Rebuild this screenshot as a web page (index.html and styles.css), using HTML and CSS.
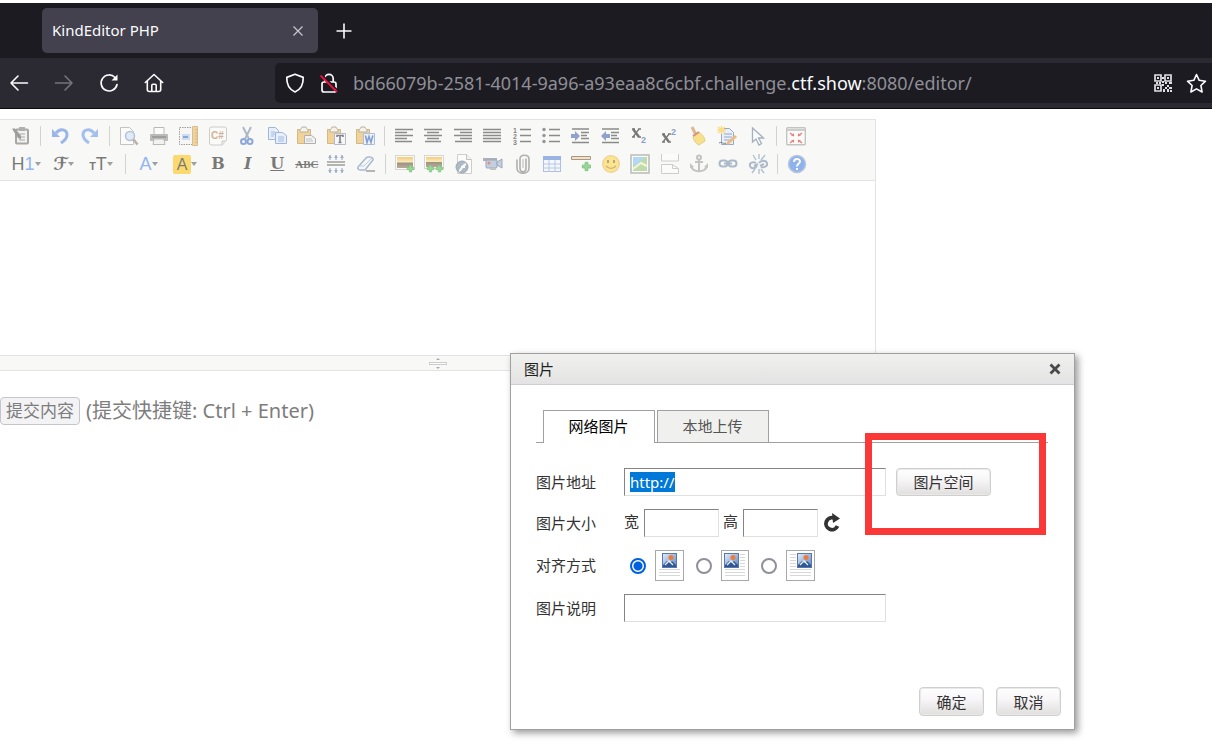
FILE: index.html
```html
<!DOCTYPE html>
<html lang="zh-CN">
<head>
<meta charset="utf-8">
<title>KindEditor PHP</title>
<link rel="stylesheet" href="styles.css">
</head>
<body>
<svg class="defs" aria-hidden="true">
  <defs>
    <linearGradient id="photo" x1="0" y1="0" x2="1" y2="1"><stop offset="0" stop-color="#e4eefa"/><stop offset="1" stop-color="#5d84c0"/></linearGradient>
    <linearGradient id="sunset" x1="0" y1="0" x2="0" y2="1"><stop offset="0" stop-color="#f5a81c"/><stop offset=".45" stop-color="#fbe08a"/><stop offset=".55" stop-color="#57412a"/><stop offset="1" stop-color="#8a6b48"/></linearGradient>
    <symbol id="picture" viewBox="0 0 15 15"><rect x=".5" y=".5" width="14" height="14" fill="url(#photo)" stroke="#5877aa"/><circle cx="9" cy="4.500" r="2.500" fill="#ee7a3c"/><path d="M1 14v-2l4-4 3 2 2-2 4 4v2z" fill="#2f5795"/><path d="m3 12 4-4 4 4" fill="none" stroke="#e6eef8" stroke-width="1.300"/></symbol>
    <symbol id="clip" viewBox="0 0 20 20"><path d="M1.500 3.500h13v14h-13z" fill="#edb54a" stroke="#b38530"/><path d="M4 4c0-1 2-1 2-3h4c0 2 2 2 2 3v2H4z" fill="#f4efe3" stroke="#85775c"/></symbol>
    <symbol id="plus" viewBox="0 0 8 8"><path d="M3 1h2v2h2v2H5v2H3V5H1V3h2z" fill="#48c348" stroke="#249524" stroke-width=".7"/></symbol>
  </defs>
</svg>

<header class="browser">
  <div class="tabbar">
    <div class="tab"><span>KindEditor PHP</span>
      <button class="plain" aria-label="关闭标签页"><svg width="12" height="12" viewBox="0 0 12 12" fill="none" stroke="#c9c8cf" stroke-width="1.200"><path d="m1.500 1.500 9 9m0-9-9 9"/></svg></button>
    </div>
    <button class="plain" aria-label="新建标签页"><svg width="16" height="16" viewBox="0 0 16 16" fill="none" stroke="#fbfbfe" stroke-width="1.600"><path d="M8 .5v15M.5 8h15"/></svg></button>
  </div>
  <nav class="navbar">
    <div class="navbuttons">
      <button class="plain" aria-label="后退"><svg width="20" height="20" viewBox="0 0 20 20" fill="none" stroke="#fbfbfe" stroke-width="1.600" stroke-linecap="round" stroke-linejoin="round"><path d="M18.500 10H2m7-7-7 7 7 7"/></svg></button>
      <button class="plain" aria-label="前进"><svg width="20" height="20" viewBox="0 0 20 20" fill="none" stroke="#74737b" stroke-width="1.600" stroke-linecap="round" stroke-linejoin="round"><path d="M1.500 10H18m-7-7 7 7-7 7"/></svg></button>
      <button class="plain" aria-label="刷新"><svg width="20" height="20" viewBox="0 0 20 20" fill="none" stroke="#fbfbfe" stroke-width="1.700" stroke-linecap="round"><path d="M18 11.500A8 8 0 1 1 16 4.500"/><path d="M18.500 1.500v6h-6z" fill="#fbfbfe" stroke="none"/></svg></button>
      <button class="plain" aria-label="主页"><svg width="20" height="20" viewBox="0 0 20 20" fill="none" stroke="#fbfbfe" stroke-width="1.600" stroke-linecap="round" stroke-linejoin="round"><path d="m1.300 9.500 8.700-8 8.700 8M3.300 8v8.500c0 1.300.7 2 2 2h9.400c1.300 0 2-.7 2-2V8"/><path d="M7.800 18v-5.500c0-.8.500-1.300 1.200-1.300h2c.7 0 1.200.5 1.200 1.300V18"/></svg></button>
    </div>
    <div class="address">
      <svg width="20" height="20" viewBox="0 0 20 20" fill="none" stroke="#fbfbfe" stroke-width="1.700" stroke-linejoin="round"><path d="m10 1.200 8.200 3.200c.3 7-2.300 12-8.200 14.600C4.100 16.400 1.500 11.400 1.800 4.400z"/></svg>
      <svg width="20" height="20" viewBox="0 0 20 20" fill="none" stroke="#fbfbfe" stroke-width="1.700"><path d="M5.800 9V5.500a4.200 4.200 0 0 1 8.400 0V9"/><rect x="3" y="9" width="14" height="10" rx="2"/><path d="M2.500 1.500 19 18" stroke="#1c1b22" stroke-width="2"/><path d="M1.500 2.500 18 19" stroke="#f0103c" stroke-width="1.800"/></svg>
      <span class="url">bd66079b-2581-4014-9a96-a93eaa8c6cbf.challenge.<b>ctf.show</b>:8080/editor/</span>
      <button class="plain" aria-label="二维码"><svg width="18" height="18" viewBox="0 0 18 18"><g fill="none" stroke="#e0dfe4" stroke-width="1.700"><path d="M1 1h6v6H1zM11 1h6v6h-6zM1 11h6v6H1z"/></g><path d="M3 3h2v2H3zm10 0h2v2h-2zM3 13h2v2H3zM8 3h2v2H8zm0 4h2v2H8zM2 8h2v2H2zm3 0h2v2H5zm6 0h2v2h-2zm4 0h3v2h-3zM8 10h2v2H8zm5 1h2v2h-2zm-2 2h2v2h-2zm4 0h3v2h-3zm-2 2h2v3h-2zm-4 0h2v3H9zm7 1h2v2h-2z" fill="#e0dfe4"/></svg></button>
      <button class="plain" aria-label="添加书签"><svg width="21" height="21" viewBox="0 0 21 21" fill="none" stroke="#fbfbfe" stroke-width="1.600" stroke-linejoin="round"><path d="m10.500 1.500 2.700 5.800 6.300.9-4.600 4.300 1.200 6.500-5.600-3.100L4.900 19l1.200-6.500L1.500 8.200l6.300-.9z"/></svg></button>
    </div>
  </nav>
</header>

<main>
  <section class="editor" aria-label="编辑器">
    <div class="toolbar">
      <div class="toolrow">
        <div class="group">
          <button title="HTML代码"><svg viewBox="0 0 20 20"><rect x="5" y="3.500" width="12" height="14" rx="1" fill="#eee" stroke="#666" stroke-width="2"/><path d="M8 1h6v4H8z" fill="#777"/><path d="M9 8h5M9 11h5M8 14h6" stroke="#666"/><path d="M1 2.500h3l6 7v4L7 12 3 6z" fill="#555"/></svg></button>
        </div><i class="sep"></i>
        <div class="group pair">
          <button title="后退"><svg viewBox="0 0 20 20"><path d="M6 7c4-5 11-4 11 2 0 4-3 6-6 8" fill="none" stroke="#4c80e0" stroke-width="3"/><path d="M2 3v8h8z" fill="#4c80e0"/></svg></button>
          <button title="前进"><svg viewBox="0 0 20 20"><path d="M14 7C10 2 3 3 3 9c0 4 3 6 6 8" fill="none" stroke="#5c92e8" stroke-width="3"/><path d="M18 3v8h-8z" fill="#5c92e8"/></svg></button>
        </div><i class="sep"></i>
        <div class="group nine">
          <button title="预览"><svg viewBox="0 0 20 20"><path d="M1.500 1.500h9l4 4v13h-13z" fill="#fff" stroke="#999"/><circle cx="11" cy="10" r="4.500" fill="#cfe2fb" stroke="#7b96c0" stroke-width="1.500"/><path d="m14.500 13.500 4 5" stroke="#8b7460" stroke-width="2.500"/></svg></button>
          <button title="打印"><svg viewBox="0 0 20 20"><path d="M5 8V1.500h10V8" fill="#fff" stroke="#888"/><rect x="1" y="8" width="18" height="7" rx="1" fill="#888"/><path d="M3 11h14" stroke="#222"/><path d="M5 13h10l1 5.500H4z" fill="#eee" stroke="#888"/></svg></button>
          <button title="模板"><svg viewBox="0 0 20 20"><path d="M1.500 1.500h13v17h-13z" fill="#f5f5f5" stroke="#555" stroke-dasharray="1.500 1"/><path d="M4 8h8v6H4z" fill="#abc9ef"/><path d="M5 11h5" stroke="#3566a5" stroke-width="2"/><path d="M14.500.500h5v19h-5z" fill="#e8b760" stroke="#c98e36"/><path d="M17 4h3M17 7h3M17 10h3M17 13h3M17 16h3" stroke="#b97e26"/></svg></button>
          <button title="代码"><svg viewBox="0 0 20 20"><path d="M1.500 3a2 2 0 0 1 2-2h13a2 2 0 0 1 2 2v11l-4 5h-11a2 2 0 0 1-2-2z" fill="#fcfcfc" stroke="#aaa"/><path d="M14 19v-4h4" fill="#ddd" stroke="#aaa"/><text x="3" y="13" class="csharp">C#</text></svg></button>
          <button title="剪切"><svg viewBox="0 0 20 20"><path d="m6 1 6 12M14 1 8 13" stroke="#7385a3" stroke-width="2"/><circle cx="6.500" cy="15.500" r="2.500" fill="none" stroke="#3468c4" stroke-width="2"/><circle cx="13" cy="15.500" r="2.500" fill="none" stroke="#3468c4" stroke-width="2"/></svg></button>
          <button title="复制"><svg viewBox="0 0 20 20"><g fill="#dce9fd" stroke="#5980c4"><path d="M1.500 1.500h7l3 3v9h-10z"/><path d="M8.500 6.500h7l4 3v8h-11z"/></g><path d="M4 6h4M4 8h4M4 10h3M11 11h6M11 13h6M11 15h6" stroke="#5b8be0"/></svg></button>
          <button title="粘贴"><svg viewBox="0 0 20 20"><use href="#clip"/><path d="M8.500 9.500h7l4 3v5h-11z" fill="#eee" stroke="#777"/><path d="M10 13h6M10 15h7" stroke="#999"/></svg></button>
          <button title="粘贴为无格式文本"><svg viewBox="0 0 20 20"><use href="#clip"/><path d="M8.500 7.500h11v11h-11z" fill="#f3f6fa" stroke="#889"/><path d="M11 11v-1.500h6V11m-3-1.500v7m-1.500 0h3" fill="none" stroke="#223" stroke-width="1.600"/></svg></button>
          <button title="从Word粘贴"><svg viewBox="0 0 20 20"><use href="#clip"/><path d="M8.500 7.500h11v11h-11z" fill="#e6effd" stroke="#6c92c8"/><path d="m10.500 9.500 1.500 7 2-6 2 6 1.800-7" fill="none" stroke="#2657b3" stroke-width="1.600"/></svg></button>
        </div><i class="sep"></i>
        <div class="group thirteen">
          <button title="左对齐"><svg viewBox="0 0 20 20"><path class="lines" d="M1 3.500h18M1 6.500h12M1 9.500h18M1 12.500h12M1 15.500h17"/></svg></button>
          <button title="居中"><svg viewBox="0 0 20 20"><path class="lines" d="M1 3.500h18M4 6.500h12M1 9.500h18M4 12.500h12M2 15.500h16"/></svg></button>
          <button title="右对齐"><svg viewBox="0 0 20 20"><path class="lines" d="M1 3.500h18M7 6.500h12M1 9.500h18M7 12.500h12M2 15.500h17"/></svg></button>
          <button title="两端对齐"><svg viewBox="0 0 20 20"><path class="lines" d="M1 3.500h18M1 6.500h18M1 9.500h18M1 12.500h18M1 15.500h18"/></svg></button>
          <button title="编号"><svg viewBox="0 0 20 20"><path class="lines" d="M8 3.500h11M8 9.500h11M8 15.500h11"/><text x="1" y="7" class="num">1</text><text x="1" y="13" class="num">2</text><text x="1" y="19" class="num">3</text></svg></button>
          <button title="项目符号"><svg viewBox="0 0 20 20"><path class="lines" d="M8 3.500h11M8 9.500h11M8 15.500h11"/><g fill="#445"><circle cx="3" cy="3.500" r="1.700"/><circle cx="3" cy="9.500" r="1.700"/><circle cx="3" cy="15.500" r="1.700"/></g></svg></button>
          <button title="增加缩进"><svg viewBox="0 0 20 20"><path class="lines" d="M2 3h17M11 6.500h8M11 9.500h6M11 12.500h8M2 16.500h17"/><path d="M1 8h4V5l5 5-5 5v-3H1z" fill="#3d5da7"/></svg></button>
          <button title="减少缩进"><svg viewBox="0 0 20 20"><path class="lines" d="M2 3h17M11 6.500h8M11 9.500h6M11 12.500h8M2 16.500h17"/><path d="M10 8H6V5l-5 5 5 5v-3h4z" fill="#3d5da7"/></svg></button>
          <button title="下标"><svg viewBox="0 0 20 20"><path d="m4 3 6 8" stroke="#111" stroke-width="2.500"/><path d="m10 3-6 8M3 3h3m3 0h3M3 11h3m3 0h3" stroke="#111" stroke-width="1.300"/><text x="12" y="17" class="script">2</text></svg></button>
          <button title="上标"><svg viewBox="0 0 20 20"><path d="m4 8 6 8" stroke="#111" stroke-width="2.500"/><path d="m10 8-6 8M3 8h3m3 0h3M3 16h3m3 0h3" stroke="#111" stroke-width="1.300"/><text x="12" y="9" class="script">2</text></svg></button>
          <button title="清理HTML代码"><svg viewBox="0 0 20 20"><path d="m4 1 4 8" stroke="#c28442" stroke-width="3"/><path d="m5 11 6-5c4 3 6 6 6 9l-6 4c-3-1-5-4-6-8z" fill="#f7cf35" stroke="#d5ac30"/><path d="m5 10 6-4" stroke="#c43a22" stroke-width="2"/></svg></button>
          <button title="一键排版"><svg viewBox="0 0 20 20"><path d="M4.500 2.500h8l4 4v12h-12z" fill="#e1ebfb" stroke="#47699e"/><path d="M7 8h8M7 11h8M7 14h7" stroke="#3a67aa"/><path d="M0 4h9M4.500 0v8M1 1l7 6M8 1 1 7" stroke="#ffc72b" stroke-width="1.500"/><path d="m10 18 9-8" stroke="#e48a24" stroke-width="3"/><path d="M2 17c4-2 4 2 7 0" fill="none" stroke="#222"/></svg></button>
          <button title="全选"><svg viewBox="0 0 20 20"><path d="M5.500 2v14l3.500-3 3 6 2.500-1.500-3-5.500h5z" fill="#fff" stroke="#5e7899" stroke-width="1.300"/></svg></button>
        </div><i class="sep"></i>
        <div class="group">
          <button title="全屏显示"><svg viewBox="0 0 20 20"><rect x=".7" y="1.700" width="18.600" height="17" rx="1" fill="#fcfcfc" stroke="#999" stroke-width="1.400"/><path d="M1 4h18" stroke="#aaa" stroke-width="2"/><path d="m4 7 4 3M16 7l-4 3M4 17l4-3M16 17l-4-3" stroke="#d22" stroke-width="1.500"/><path d="M8 7v3H5zm4 0v3h3zM8 17v-3H5zm4 0v-3h3z" fill="#d22"/></svg></button>
        </div>
      </div>
      <div class="toolrow">
        <div class="group fonts">
          <button title="段落" class="wide letter">H<span class="blue">1</span><i class="arrow"></i></button>
          <button title="字体" class="wide letter fancy">ℱ<i class="arrow"></i></button>
          <button title="文字大小" class="wide letter"><small>T</small>T<i class="arrow"></i></button>
        </div><i class="sep"></i>
        <div class="group styles">
          <button title="文字颜色" class="wide letter"><span class="blue">A</span><i class="arrow"></i></button>
          <button title="文字背景" class="wide letter"><span class="mark">A</span><i class="arrow"></i></button>
          <button title="粗体" class="letter serif">B</button>
          <button title="斜体" class="letter serif italic">I</button>
          <button title="下划线" class="letter serif under">U</button>
          <button title="删除线" class="letter serif strike">ABC</button>
          <button title="行距"><svg viewBox="0 0 20 20"><path d="M1 8h18M1 11h18" stroke="#555" stroke-width="1.500"/><path d="M4 6V1M10 6V1M16 6V1M4 14v5M10 14v5M16 14v5" stroke="#5574a8" stroke-width="1.200"/><path d="m2 4 2-3 2 3zm6 0 2-3 2 3zm6 0 2-3 2 3zM2 16l2 3 2-3zm6 0 2 3 2-3zm6 0 2 3 2-3z" fill="#5574a8"/></svg></button>
          <button title="删除格式"><svg viewBox="0 0 20 20"><path d="m2 13 8-9c2-2 8-1 7 2l-8 10H5c-2 0-4-1-3-3z" fill="#f4f8ff" stroke="#6b82ad" stroke-width="1.500"/><path d="M2 12h6l8-8" fill="none" stroke="#90a5c8"/><path d="M10 17h9" stroke="#555" stroke-width="1.500"/></svg></button>
        </div><i class="sep"></i>
        <div class="group thirteen">
          <button title="图片"><svg viewBox="0 0 20 20"><rect x=".5" y="1.500" width="19" height="14" fill="#fff" stroke="#bbb"/><path d="M2 3h16v11H2z" fill="url(#sunset)"/><use href="#plus" x="11" y="10" width="9" height="9"/></svg></button>
          <button title="批量图片上传"><svg viewBox="0 0 20 20"><rect x=".5" y="1.500" width="19" height="13" fill="#fff" stroke="#bbb"/><path d="M2 3h16v10H2z" fill="url(#sunset)"/><use href="#plus" x="2" y="10" width="9" height="9"/><use href="#plus" x="11" y="10" width="9" height="9"/></svg></button>
          <button title="Flash"><svg viewBox="0 0 20 20"><path d="M3.500.500h9l5 5v14h-14z" fill="#fff" stroke="#aaa"/><path d="M12.500.500v5h5" fill="#eee" stroke="#999"/><circle cx="8" cy="13" r="6" fill="#72879f" stroke="#53677e"/><path d="M5 17c2 0 3-6 7-7M7 13h4" fill="none" stroke="#fff" stroke-width="2"/></svg></button>
          <button title="视音频"><svg viewBox="0 0 20 20"><path d="M0 4h14v3H0z" fill="#778"/><rect x="3" y="6" width="11" height="8" rx="1" fill="#9aafca" stroke="#516b8f"/><path d="m14 8 5-3v9l-5-3z" fill="#9aafca" stroke="#516b8f"/><circle cx="6" cy="9" r="1.500" fill="#d33"/><path d="M7 14v2h6v-2" fill="#999"/></svg></button>
          <button title="插入文件"><svg viewBox="0 0 20 20"><path d="M13 5v9c0 5-6 5-6 0V5c0-5 9-5 9 0v9c0 7-12 7-12 0V6" fill="none" stroke="#777" stroke-width="1.600" stroke-linecap="round"/><path d="M10 5v9" stroke="#888"/></svg></button>
          <button title="表格"><svg viewBox="0 0 20 20"><rect x="1.500" y="2.500" width="17" height="15" fill="#f3f7fe" stroke="#6f94d6"/><path d="M1 2h18v4H1z" fill="#4d7dd7"/><path d="M1 10h18M1 14h18M7 6v12M13 6v12" stroke="#7c9fdd"/></svg></button>
          <button title="插入横线"><svg viewBox="0 0 20 20"><path d="M.5 2.500h19v3H.5z" fill="#f2cf9b" stroke="#684b2a"/><use href="#plus" x="10" y="7" width="11" height="11"/></svg></button>
          <button title="插入表情"><svg viewBox="0 0 20 20"><circle cx="10" cy="10" r="8.300" fill="#ffd53c" stroke="#eab33e" stroke-width="1.300"/><path d="M7 6v3m6-3v3" stroke="#6b4c18" stroke-width="1.600"/><path d="M5 12c3 3 7 3 10 0" fill="none" stroke="#b2791b" stroke-width="1.600"/></svg></button>
          <button title="百度地图"><svg viewBox="0 0 20 20"><rect x="1" y="1" width="18" height="18" fill="#fff" stroke="#888" stroke-width="1.500"/><path d="M3 3h14v14H3z" fill="#92c46b"/><path d="M3 3h12L9 9l-3 3-3-2z" fill="#7cbef1"/><path d="m3 15 8-6 6 3" fill="none" stroke="#f3f0ca" stroke-width="2"/></svg></button>
          <button title="插入分页符"><svg viewBox="0 0 20 20"><path d="M1.500 0v7h17V0M1.500 19.500v-9h11l6 4v5z" fill="#fff" stroke="#aaa"/><path d="M12.500 10.500v4h6" fill="none" stroke="#aaa"/></svg></button>
          <button title="锚点"><svg viewBox="0 0 20 20"><circle cx="10" cy="3.500" r="2" fill="none" stroke="#999" stroke-width="2"/><path d="M10 5v13M6 8h8M2 12c2 7 14 7 16 0" fill="none" stroke="#999" stroke-width="2"/><path d="M1 14V9l4 4zm18 0V9l-4 4z" fill="#999"/></svg></button>
          <button title="超级链接"><svg viewBox="0 0 20 20"><g fill="none" stroke="#6f86a6" stroke-width="2"><rect x="1.500" y="6.500" width="8" height="6" rx="3"/><rect x="10.500" y="6.500" width="8" height="6" rx="3"/><path d="M6 9.500h8"/></g></svg></button>
          <button title="取消超级链接"><svg viewBox="0 0 20 20"><g fill="none" stroke="#6f86a6" stroke-width="2"><path d="M8 9c-3-2-7 0-6 3s5 3 7 0M11 9c2-3 7-3 8 0s-3 5-6 4"/><path d="m6 12 4-2m2 2 4-2"/></g><path d="m5 1 3 5M11 0v5m6-4-4 5M4 19l3-4m4 0v5m5-1-3-4" stroke="#7290ab" stroke-width="1.300"/></svg></button>
        </div><i class="sep"></i>
        <div class="group">
          <button title="关于"><svg viewBox="0 0 20 20"><circle cx="10" cy="10" r="8.500" fill="#397ae8" stroke="#8b9fc5" stroke-width="1.500"/><path d="M7 8c0-4 6-4 6-.5 0 2-3 2-3 5M10 14v2" fill="none" stroke="#fff" stroke-width="2"/></svg></button>
        </div>
      </div>
    </div>
    <div class="edit" contenteditable="true" role="textbox" aria-label="内容"></div>
    <div class="status"><svg width="20" height="13" viewBox="0 0 20 13"><path d="m8 3 2-2 2 2zm0 7 2 2 2-2z" fill="#aaa"/><rect x="1.500" y="5.500" width="17" height="2" fill="#fff" stroke="#ccc"/></svg></div>
  </section>
  <p class="submit"><button>提交内容</button><span>(提交快捷键: Ctrl + Enter)</span></p>
</main>

<section class="dialog" role="dialog" aria-labelledby="dialog-title">
  <header class="dialog-head"><span id="dialog-title">图片</span>
    <button class="plain" aria-label="关闭"><svg width="12" height="12" viewBox="0 0 12 12"><path d="m2.500 2.500 7 7m0-7-7 7" stroke="#4a4a4a" stroke-width="2.800" stroke-linecap="square"/></svg></button>
  </header>
  <form class="dialog-body">
    <div class="tabs"><button type="button" class="on">网络图片</button><button type="button">本地上传</button></div>
    <div class="fields">
      <div class="row"><label for="url">图片地址</label><input id="url" class="text long" type="text" value="http://"><button type="button" class="btn space">图片空间</button></div>
      <div class="row"><span class="name">图片大小</span><label class="mini" for="w">宽</label><input id="w" class="text short" type="text"><label class="mini high" for="h">高</label><input id="h" class="text short" type="text">
        <button type="button" class="plain refresh" aria-label="重置大小"><svg width="18" height="20" viewBox="0 0 18 20"><path d="M14.500 13A6 6 0 1 1 11 5" fill="none" stroke="#333" stroke-width="3.800"/><path d="M9 0 17 5.500 10 10z" fill="#333"/></svg></button></div>
      <div class="row"><span class="name">对齐方式</span>
        <label class="align"><input type="radio" name="align" aria-label="默认" checked><svg width="29" height="31" viewBox="0 0 29 31"><rect class="page" x=".5" y=".5" width="28" height="30"/><path class="rule" d="M4 19.500h21M4 22.500h21M4 25.500h21"/><use href="#picture" x="7" y="3" width="15" height="15"/></svg></label>
        <label class="align"><input type="radio" name="align" aria-label="左对齐"><svg width="28" height="31" viewBox="0 0 28 31"><rect class="page" x=".5" y=".5" width="27" height="30"/><path class="rule" d="M19 4.500h5M19 7.500h5M19 10.500h5M19 13.500h5M19 16.500h5M4 19.500h20M4 22.500h20M4 25.500h20"/><use href="#picture" x="3" y="3" width="15" height="15"/></svg></label>
        <label class="align"><input type="radio" name="align" aria-label="右对齐"><svg width="29" height="31" viewBox="0 0 29 31"><rect class="page" x=".5" y=".5" width="28" height="30"/><path class="rule" d="M4 4.500h6M4 7.500h6M4 10.500h6M4 13.500h6M4 16.500h6M4 19.500h21M4 22.500h21M4 25.500h21"/><use href="#picture" x="11" y="3" width="15" height="15"/></svg></label>
      </div>
      <div class="row"><label for="title">图片说明</label><input id="title" class="text long" type="text"></div>
    </div>
    <div class="actions"><button type="button" class="btn">确定</button><button type="button" class="btn">取消</button></div>
  </form>
</section>
<div class="highlight"></div>
<script src="script.js"></script>
</body>
</html>
```
FILE: styles.css
```css
* { box-sizing: border-box; }
body { margin: 0; padding-top: 3px; background: #fff; font-family: "Noto Sans", "Noto Sans CJK SC", sans-serif; font-size: 15px; color: #333; }
button, input { font: inherit; color: inherit; margin: 0; }
svg { display: block; flex: none; }
.defs { position: absolute; width: 0; height: 0; }
.plain { padding: 0; border: 0; background: none; }

.browser { color: #fbfbfe; border-bottom: 1px solid #0c0c0d; }
.tabbar { display: flex; align-items: center; gap: 18px; height: 55px; padding-left: 42px; background: #1c1b22; }
.tab { display: flex; align-items: center; justify-content: space-between; width: 276px; height: 45px; padding: 0 14px 0 10px; border-radius: 5px; background: #42414d; }
.tab span { padding-bottom: 2px; }
.navbar { display: flex; align-items: center; height: 50px; background: #2b2a33; }
.navbuttons { display: flex; gap: 25px; padding-left: 9px; width: 275px; flex: none; }
.address { flex: 1; min-width: 0; display: flex; align-items: center; gap: 14px; height: 40px; padding: 0 5px 0 10px; border-radius: 5px 0 0 5px; background: #1c1b22; }
.url { flex: 1; font-size: 18px; color: #8f8f96; white-space: nowrap; }
.url b { font-weight: 400; color: #fbfbfe; }

main { padding-top: 10px; }
.editor { max-width: 876px; border: 1px solid #e3e3e3; border-left: 0; }
.toolbar { display: flex; flex-direction: column; gap: 8px; height: 61px; padding: 6px 0 0 11px; background: #f8f8f6; border-bottom: 1px solid #e3e3e3; }
.toolrow { display: flex; align-items: center; height: 20px; }
.group { display: flex; justify-content: space-between; }
.pair { width: 50px; }
.nine { width: 256px; }
.thirteen { width: 373px; }
.fonts { width: 105px; }
.styles { width: 241px; }
.sep { width: 1px; height: 20px; margin: 0 9px; background: #d2d2d0; }
.toolbar button { width: 20px; height: 20px; padding: 0; border: 0; background: none; display: flex; align-items: center; justify-content: center; opacity: .55; }
.toolbar svg { width: 20px; height: 20px; }
.toolbar .wide { width: 27px; }
.fonts .wide { width: 30px; }
.lines { stroke: #333; stroke-width: 1.6px; fill: none; }
.num { font: bold 7px "Liberation Sans", sans-serif; fill: #222; }
.csharp { font: bold 10px "Liberation Sans", sans-serif; fill: #b4783c; }
.script { font: bold 9px "Liberation Sans", sans-serif; fill: #2c57a4; }
.letter { font: 18px/20px "Liberation Sans", sans-serif; color: #111; }
.letter small { font-size: 11px; font-weight: 700; align-self: flex-end; line-height: 16px; }
.arrow { border: 3px solid transparent; border-top: 4px solid #555; border-bottom: 0; }
.blue { color: #3f7df0; }
.mark { padding: 0 4px; border-radius: 2px; background: #ffc000; line-height: 19px; font-size: 16px; }
.fancy { font-family: "DejaVu Sans", "DejaVu Serif", serif; font-weight: 700; }
.serif { font: bold 18px/20px "DejaVu Serif", serif; font-size: 16px; }
.italic { font-style: italic; }
.under { text-decoration: underline; }
.strike { font: bold 11px/20px "Liberation Serif", serif; text-decoration: line-through; }
.edit { height: 174px; outline: 0; }
.status { display: flex; justify-content: center; align-items: center; height: 15px; background: #f8f8f6; border-top: 1px solid #e3e3e3; }
.submit { display: flex; align-items: center; gap: 6px; margin: 26px 0 0; font-size: 20px; line-height: 28px; color: #7d7d7d; }
.submit button { width: 80px; height: 28px; padding: 0; border: 1px solid #c5c5cb; border-radius: 4px; background: #f3f3f6; font-size: 17px; line-height: 20px; }

.dialog { position: absolute; left: 510px; top: 353px; width: 565px; background: #fff; border: 1px solid #a0a0a0; box-shadow: 3px 3px 7px #999; }
.dialog-head { display: flex; align-items: center; justify-content: space-between; height: 31px; padding: 0 13px; border-bottom: 1px solid #cfcfcf; background: linear-gradient(#f0f0ee, #e3e3e3); color: #222; }
.dialog-head span, .row > label:first-child, .name { padding-bottom: 2px; }
.dialog-body { padding: 25px 13px 13px 25px; }
.tabs { display: flex; gap: 2px; height: 33px; padding-left: 7px; margin-right: 13px; border-bottom: 1px solid #a0a0a0; }
.tabs button { width: 112px; height: 32px; padding: 0 1px 2px 0; border: 1px solid #a0a0a0; border-bottom: 0; background: #f0f0ee; color: #555; }
.tabs .on { height: 33px; padding-bottom: 3px; background: #fff; color: #000; }
.fields { display: flex; flex-direction: column; gap: 13px; padding-top: 25px; }
.row { display: flex; align-items: center; min-height: 28px; }
.row > label:first-child, .name { width: 88px; }
.text { height: 28px; padding: 0 5px; border: 1px solid; border-color: #848484 #e0e0e0 #e0e0e0 #848484; background: #fff; border-radius: 0; outline: 0; }
.text::selection { background: #0078d7; color: #fff; }
.long { width: 262px; }
.short { width: 75px; }
.row .mini { width: 20px; padding-bottom: 5px; }
.row .high { margin-left: 4px; }
.refresh { margin-left: 5px; }
.btn { width: 65px; height: 29px; padding: 0 0 1px; border: 1px solid #cfcfcf; border-radius: 4px; background: linear-gradient(#fff, #f8f6f8 40%, #e0dfdd); box-shadow: inset 0 0 0 1px #e9e9e9; }
.space { width: 95px; height: 28px; margin-left: 10px; }
.align { display: flex; align-items: center; gap: 9px; margin-right: 6px; padding-left: 6px; }
.align input { appearance: none; width: 16px; height: 16px; border: 2px solid #8f8f9d; border-radius: 50%; background: #fff; }
.align input:checked { border-color: #0060df; background: radial-gradient(circle, #0060df 4px, #fff 5px); }
.page { fill: #fff; stroke: #a8a8a8; }
.rule { stroke: #d8d8d8; fill: none; }
.actions { display: flex; justify-content: flex-end; gap: 12px; padding-top: 65px; }
.highlight { position: absolute; left: 865px; top: 433px; width: 181px; height: 102px; border: 7px solid #fb3838; pointer-events: none; }
```
FILE: script.js
```js
const address = document.getElementById("url");
address.focus();
address.select();
```
